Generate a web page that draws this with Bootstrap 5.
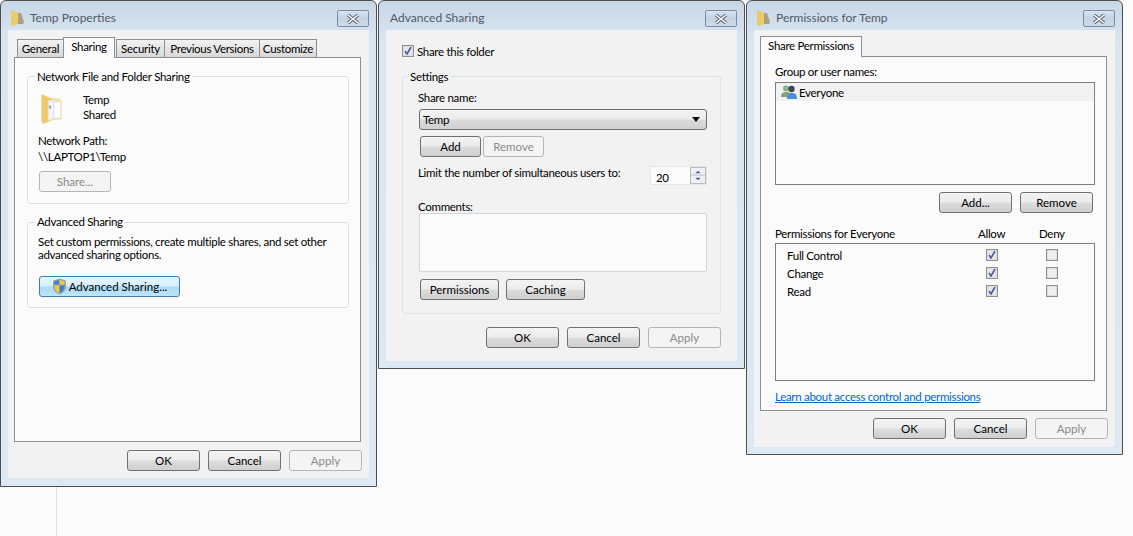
<!DOCTYPE html>
<html lang="en"><head><meta charset="utf-8"><title>Temp sharing dialogs</title>
<link rel="stylesheet" href="https://cdn.jsdelivr.net/npm/bootstrap@5.3.0/dist/css/bootstrap.min.css">
<style>
html,body{margin:0;height:536px;overflow:hidden;background:#fbfbfb}
body{position:relative;font:11.5px/15px Lato,Roboto,sans-serif;letter-spacing:-.3px;color:#000;width:1133px}
.stem{position:absolute;left:56px;top:487px;width:1px;height:49px;background:#cfe3f5}
.wdw{position:absolute;top:0;border:1px solid #4e4e4e;border-radius:6px 6px 0 0;background:linear-gradient(#c8d7e6,#d9e6f2 40px,#dce8f3);box-sizing:border-box}
.w1{left:0;width:377px;height:487px}.w2{left:378px;width:367px;height:369px}.w3{left:746px;width:377px;height:455px}
.ttl{height:29px;padding:4px 7px 0 10px;color:#50596a;font-size:12px;letter-spacing:0}
.w2 .ttl{padding-left:11px}.w3 .ttl{padding-left:10px}
.ttl-ic{width:13px;height:16px;margin-right:6px}
.xbtn{width:32px;height:17px;border:1px solid #7d8ba0;border-radius:2px;background:linear-gradient(#d9e4ef,#c3d2e2 50%,#cfdcea);padding:0;margin-top:2px}
.client{margin:0 7px;height:448px;background:repeating-conic-gradient(#f7f6f6 0 25%,#efeeee 0 50%) 0 0/2px 2px}
.w2 .client{height:331px}.w3 .client{height:417px}
.tabstrip{padding:7px 0 0 9px;height:27px;align-items:flex-end;margin:0}
.w3 .tabstrip{padding:6px 0 0 6px;height:26px}
.wtab{height:18px;border:1px solid #8a8f98;border-bottom:0;background:linear-gradient(#f2f2f2,#d8d8d8);padding:0;margin-right:-1px;line-height:18px;text-align:center;box-sizing:border-box;white-space:nowrap}
.wtab.act{height:21px;margin:0 1px -1px 0;background:#fbfbfb;z-index:1;position:relative;line-height:18px}
.t-gen{width:47px}.t-sha{width:52px}.t-sec{width:49px}.t-pre{width:96px}.t-cus{width:58px}.t-per{width:102px}
.tpage{margin-left:6px;width:347px;height:385px;background:#fbfbfb;border:1px solid #8a8f98;box-sizing:border-box}
.w3 .tpage{height:355px}
.inset1{padding:18px 11px 0 12px}
.gbox{position:relative;border:1px solid #d6e0ea;border-radius:3px;box-sizing:border-box}
.gname{position:absolute;top:-8px;left:7px;padding:0 2px;background:#fbfbfb}
.g1{height:128px;padding:15px 10px 0}.g2{height:86px;margin-top:18px;padding:12px 10px 0}
.g2 .gname{top:-9px}
.g1ic{width:24px;height:32px;margin:1px 19px 0 2px}
.p-net{margin-top:8px}.p-path{margin-top:1px}
.wbtn{display:block;width:73px;height:21px;padding:0;font:inherit;line-height:20px;color:#000;border:1px solid #707070;border-radius:3px;background:linear-gradient(#f4f4f4,#ebebeb 48%,#dcdcdc 52%,#cfcfcf);box-sizing:border-box}
.wbtn:disabled{color:#8a8a8a;border-color:#b5b5b5;background:#f4f4f4;opacity:1}
.wbtn:hover{color:#000;border-color:#707070}
.b-share{margin:7px 0 0 1px;width:72px}
.wrap13{line-height:13px}
.b-adv{margin:15px 0 0 1px;width:141px;border-color:#3c7fb1;background:linear-gradient(#e9f6fd,#d6eefb 48%,#a9dbf6 52%,#bfe5fa)}
.shld{width:15px;height:17px;margin-right:2px}
.foot{padding:8px 7px 0 0;gap:8px}
.w2 .foot{padding:13px 16px 0 0}.w3 .foot{padding:7px 7px 0 0}
.chkrow{padding:15px 0 0 16px;height:46px;align-items:flex-start}
.wchk.form-check-input{width:12px;height:12px;margin:0;border:1px solid #8e8f8f;border-radius:0;background-color:#eeeeee;background-size:10px 10px;opacity:1;box-shadow:inset 0 0 0 1px #dedede;flex:none}
.wchk.form-check-input:checked{background-color:#e6e6ea;border-color:#8e8f8f;background-image:url("data:image/svg+xml,%3Csvg xmlns='http://www.w3.org/2000/svg' viewBox='0 0 10 10'%3E%3Cpath d='M2 5l2 3 4-7' fill='none' stroke='%234a5b9c' stroke-width='1.6'/%3E%3C/svg%3E")}
.chklab{margin:-1px 0 0 3px}
.g3{margin:0 0 0 16px;width:319px;height:238px;padding:13px 13px 0 15px;border-color:#dbe3ea}
.w2 .gname{background:#f3f2f2;left:5px}
.wsel{margin:4px 0 0 1px;width:288px;height:21px;padding:0 3px;border:1px solid #707070;border-radius:3px;background:linear-gradient(#f4f4f4,#ebebeb 48%,#dcdcdc 52%,#cfcfcf);box-sizing:border-box;line-height:19px}
.caret{width:0;height:0;border:4px solid transparent;border-top:5px solid #111;border-bottom:0;margin-right:3px}
.sharebtns{margin:6px 0 0 2px;gap:2px}.sharebtns .wbtn{width:61px}
.limit{margin-top:9px;width:289px}
.limtxt{margin-top:-1px}
.spin{width:57px;height:19px;background:#fbfbfb;border:1px solid #e2e5ea;padding-left:5px;line-height:22px;box-sizing:border-box;position:relative}
.spinb{width:16px;height:17px;flex:none;border:1px solid #b8bcc2;background:#eef0f3;margin-left:auto;display:block}
.cmt{margin-top:15px;line-height:13px}
.warea{display:block;margin-left:1px;width:288px;height:59px;background:#fbfbfb;border:1px solid #cfd6df;border-radius:2px;box-sizing:border-box}
.permbtns{margin:7px 0 0 2px;gap:7px}.permbtns .wbtn{width:79px}
.w3body{padding:7px 0 0 14px}
.lbox{width:320px;margin-top:3px;height:103px;padding:0;border:1px solid #7a7f86;box-sizing:border-box;border-radius:0}
.lrow{height:18px;padding:0 0 0 5px;border:0;border-radius:0;background:repeating-conic-gradient(#f6f5f5 0 25%,#eeeeee 0 50%) 0 0/2px 2px;color:#000}
.usr{width:17px;height:16px;margin-right:1px}
.lbtns{margin:7px 0 0 0;width:318px;gap:8px}
.phead{margin-top:13px;width:320px}
.ph-a{width:25px;margin-left:auto;text-align:center}.ph-d{width:25px;margin:0 31px 0 36px;text-align:center}
.pbox{width:320px;height:138px;margin-top:2px;border:1px solid #7a7f86;padding:2px 0 0 11px;box-sizing:border-box}
.prow{height:18px;padding-right:36px}
.prow .wchk.a{margin-left:auto}.prow .wchk.d{margin:0 0 0 48px}
.plink{display:block;margin-top:8px;color:#0066cc;text-decoration:underline;line-height:15px}
</style></head><body>
<div class="stem"></div>

<section class="wdw w1">
 <div class="ttl d-flex align-items-center">
  <svg class="ttl-ic" viewBox="0 0 13 16"><path d="M7 3h3l3 9-1 2H6z" fill="#a99f85"/><path d="M0 0l7 3v11l-5 2-2-1z" fill="#eccb62"/></svg>
  <span class="flex-grow-1">Temp Properties</span>
  <button class="xbtn d-flex align-items-center justify-content-center" aria-label="Close"><svg width="14" height="10" viewBox="0 0 14 10"><path d="M2 1l10 8M12 1L2 9" stroke="#55606e" stroke-width="3.4"/><path d="M2 1l10 8M12 1L2 9" stroke="#fff" stroke-width="1.6"/></svg></button>
 </div>
 <div class="client">
  <div class="tabstrip d-flex">
   <div class="wtab t-gen">General</div><div class="wtab act t-sha">Sharing</div><div class="wtab t-sec">Security</div><div class="wtab t-pre">Previous Versions</div><div class="wtab t-cus">Customize</div>
  </div>
  <div class="tpage inset1">
   <div class="gbox g1">
    <div class="gname">Network File and Folder Sharing</div>
    <div class="d-flex">
     <svg class="g1ic" viewBox="0 0 24 33"><path d="M1 1l11 5v22l-9 4-2-3z" fill="#ecca6c"/><path d="M12 5l8 1 2 2v19l-10 1z" fill="#f5e2a3"/><path d="M8 8l6-1v19l-6 3z" fill="#f3f4f5" stroke="#d2d6da" stroke-width=".7"/><path d="M14 9l7 0v17l-7 0z" fill="#fdfdfd" stroke="#dadde0" stroke-width=".7"/><path d="M9 13l2 0v3l-2 0z" fill="#7ea4c8"/></svg>
     <div><div>Temp</div><div>Shared</div></div>
    </div>
    <div class="p-net">Network Path:</div>
    <div class="p-path">\\LAPTOP1\Temp</div>
    <button class="btn wbtn b-share" disabled>Share...</button>
   </div>
   <div class="gbox g2">
    <div class="gname">Advanced Sharing</div>
    <div class="wrap13">Set custom permissions, create multiple shares, and set other<br>advanced sharing options.</div>
    <button class="btn wbtn b-adv d-flex align-items-center justify-content-center">
     <svg class="shld" viewBox="0 0 15 17"><path d="M7.5.5l6.5 2v6c0 4-3 6.500-6.500 8C4 15 1 12.500 1 8.500v-6z" fill="#9aa3ab"/><path d="M7.500 2l-5 1.500v3h5z" fill="#3f7fd1"/><path d="M7.500 2l5 1.500v3h-5z" fill="#f3cd2b"/><path d="M2.500 7.500h5V15c-3-1-5-3.500-5-7.500z" fill="#f3cd2b"/><path d="M7.500 7.500h5c0 4-2 6.500-5 7.500z" fill="#3f7fd1"/></svg>
     <span>Advanced Sharing...</span>
    </button>
   </div>
  </div>
  <div class="foot d-flex justify-content-end">
   <button class="btn wbtn">OK</button><button class="btn wbtn">Cancel</button><button class="btn wbtn" disabled>Apply</button>
  </div>
 </div>
</section>

<section class="wdw w2">
 <div class="ttl d-flex align-items-center">
  <span class="flex-grow-1">Advanced Sharing</span>
  <button class="xbtn d-flex align-items-center justify-content-center" aria-label="Close"><svg width="14" height="10" viewBox="0 0 14 10"><path d="M2 1l10 8M12 1L2 9" stroke="#55606e" stroke-width="3.4"/><path d="M2 1l10 8M12 1L2 9" stroke="#fff" stroke-width="1.6"/></svg></button>
 </div>
 <div class="client">
  <div class="chkrow d-flex">
   <input class="form-check-input wchk" type="checkbox" checked aria-label="Share this folder"><span class="chklab">Share this folder</span>
  </div>
  <div class="gbox g3">
   <div class="gname">Settings</div>
   <div>Share name:</div>
   <div class="wsel d-flex align-items-center justify-content-between"><span>Temp</span><span class="caret"></span></div>
   <div class="sharebtns d-flex"><button class="btn wbtn">Add</button><button class="btn wbtn" disabled>Remove</button></div>
   <div class="limit d-flex justify-content-between">
    <span class="limtxt">Limit the number of simultaneous users to:</span>
    <div class="spin d-flex"><span>20</span>
     <svg class="spinb" viewBox="0 0 16 17"><path d="M0 8h16" stroke="#b8bcc2"/><path d="M8 3l3 3H5z" fill="#4a5b9c"/><path d="M5 11h6l-3 3z" fill="#4a5b9c"/></svg>
    </div>
   </div>
   <div class="cmt">Comments:</div>
   <div class="warea"></div>
   <div class="permbtns d-flex"><button class="btn wbtn">Permissions</button><button class="btn wbtn">Caching</button></div>
  </div>
  <div class="foot d-flex justify-content-end">
   <button class="btn wbtn">OK</button><button class="btn wbtn">Cancel</button><button class="btn wbtn" disabled>Apply</button>
  </div>
 </div>
</section>

<section class="wdw w3">
 <div class="ttl d-flex align-items-center">
  <svg class="ttl-ic" viewBox="0 0 13 16"><path d="M7 3h3l3 9-1 2H6z" fill="#a99f85"/><path d="M0 0l7 3v11l-5 2-2-1z" fill="#eccb62"/></svg>
  <span class="flex-grow-1">Permissions for Temp</span>
  <button class="xbtn d-flex align-items-center justify-content-center" aria-label="Close"><svg width="14" height="10" viewBox="0 0 14 10"><path d="M2 1l10 8M12 1L2 9" stroke="#55606e" stroke-width="3.4"/><path d="M2 1l10 8M12 1L2 9" stroke="#fff" stroke-width="1.6"/></svg></button>
 </div>
 <div class="client">
  <div class="tabstrip d-flex"><div class="wtab act t-per">Share Permissions</div></div>
  <div class="tpage w3body">
   <div>Group or user names:</div>
   <ul class="list-group lbox">
    <li class="list-group-item lrow d-flex align-items-center">
     <svg class="usr" viewBox="0 0 17 16"><circle cx="5" cy="4.500" r="3" fill="#8fae8c"/><path d="M0 13c0-4 2-5 5-5s5 1 5 5z" fill="#7fa37c"/><circle cx="10.500" cy="5" r="3.200" fill="#3d4a52"/><path d="M6 15c0-4 1-6 5-6s5 2 5 6z" fill="#4a8fd6"/></svg>
     <span>Everyone</span>
    </li>
   </ul>
   <div class="lbtns d-flex justify-content-end"><button class="btn wbtn">Add...</button><button class="btn wbtn">Remove</button></div>
   <div class="phead d-flex"><span>Permissions for Everyone</span><span class="ph-a">Allow</span><span class="ph-d">Deny</span></div>
   <div class="pbox">
    <div class="prow d-flex align-items-center"><span>Full Control</span><input class="form-check-input wchk a" type="checkbox" checked aria-label="Allow Full Control"><input class="form-check-input wchk d" type="checkbox" aria-label="Deny Full Control"></div>
    <div class="prow d-flex align-items-center"><span>Change</span><input class="form-check-input wchk a" type="checkbox" checked aria-label="Allow Change"><input class="form-check-input wchk d" type="checkbox" aria-label="Deny Change"></div>
    <div class="prow d-flex align-items-center"><span>Read</span><input class="form-check-input wchk a" type="checkbox" checked aria-label="Allow Read"><input class="form-check-input wchk d" type="checkbox" aria-label="Deny Read"></div>
   </div>
   <a class="plink" href="#">Learn about access control and permissions</a>
  </div>
  <div class="foot d-flex justify-content-end">
   <button class="btn wbtn">OK</button><button class="btn wbtn">Cancel</button><button class="btn wbtn" disabled>Apply</button>
  </div>
 </div>
</section>
<script src="https://cdn.jsdelivr.net/npm/bootstrap@5.3.0/dist/js/bootstrap.bundle.min.js"></script>
</body></html>
